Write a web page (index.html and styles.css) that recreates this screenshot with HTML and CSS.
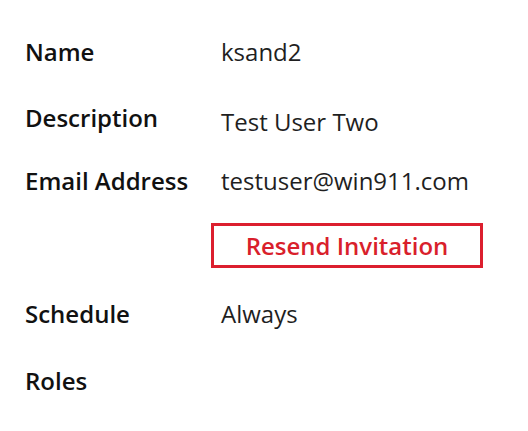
FILE: index.html
```html
<!DOCTYPE html>
<html lang="en">
<head>
<meta charset="utf-8">
<title>User details</title>
<link rel="stylesheet" href="styles.css">
</head>
<body>
<div class="sheet">
  <div class="row row-name">
    <div class="label">Name</div>
    <div class="value">ksand2</div>
  </div>
  <div class="row row-desc">
    <div class="label">Description</div>
    <div class="value value-low">Test User Two</div>
  </div>
  <div class="row row-email">
    <div class="label">Email Address</div>
    <div class="value">testuser@win911.com</div>
  </div>
  <div class="row row-action">
    <div class="label"></div>
    <div class="value"><button class="resend" type="button">Resend Invitation</button></div>
  </div>
  <div class="row row-schedule">
    <div class="label">Schedule</div>
    <div class="value">Always</div>
  </div>
  <div class="row row-roles">
    <div class="label">Roles</div>
    <div class="value"></div>
  </div>
</div>
</body>
</html>
```
FILE: styles.css
```css
html, body {
  margin: 0;
  padding: 0;
  background: #ffffff;
}
body {
  font-family: "Open Sans", "Noto Sans", "Liberation Sans", sans-serif;
  font-size: 24px;
  color: #1b1b1b;
}
.sheet {
  padding: 35px 0 0 25px;
}
.row {
  display: grid;
  grid-template-columns: 196px 1fr;
  line-height: 33px;
}
.label {
  font-weight: 600;
  color: #111111;
}
.value {
  color: #1f1f1f;
}
.value-low {
  padding-top: 4px;
}
.row-name { margin-bottom: 33px; }
.row-desc { margin-bottom: 26px; }
.row-email { margin-bottom: 26px; }
.row-action { margin-bottom: 29px; }
.row-schedule { margin-bottom: 34px; }
.resend {
  display: flex;
  align-items: center;
  justify-content: center;
  margin-left: -10px;
  width: 272px;
  height: 45px;
  box-sizing: border-box;
  border: 3px solid #dc1f2e;
  background: #ffffff;
  color: #d91f2c;
  font-family: inherit;
  font-size: 24px;
  font-weight: 600;
  padding: 0;
  cursor: pointer;
}
```
